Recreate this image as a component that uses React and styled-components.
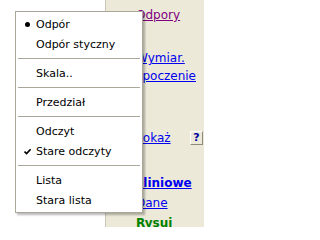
import React from "react";
import styled, { createGlobalStyle } from "styled-components";

const GlobalStyle = createGlobalStyle`
  html, body {
    margin: 0;
    padding: 0;
    background: #fff;
    overflow: hidden;
  }
`;

const Page = styled.div`
  position: relative;
  display: flex;
  width: 204px;
  height: 227px;
  overflow: hidden;
  font-family: "DejaVu Sans", "Liberation Sans", sans-serif;
`;

const LeftPane = styled.div`
  width: 105px;
  background: #fff;
  border-right: 1px solid #c9c6b9;
`;

const RightPane = styled.div`
  flex: 1;
  display: flex;
  flex-direction: column;
  background: #ece9d8;
  padding: 6px 1px 0 30px;
  font-size: 12px;
  line-height: 18px;
`;

const Link = styled.a`
  display: block;
  color: ${({ $visited }) => ($visited ? "#800080" : "#0000ee")};
  text-decoration: underline;
  white-space: nowrap;
  margin-top: ${({ $gap }) => $gap || 0}px;
  margin-left: ${({ $shift }) => -($shift || 0)}px;
  font-weight: ${({ $bold }) => ($bold ? "bold" : "normal")};
`;

const Heading = styled.div`
  color: #008000;
  font-weight: bold;
  white-space: nowrap;
  margin-top: 2px;
`;

const Row = styled.div`
  display: flex;
  align-items: center;
  margin-top: 44px;
`;

const HelpButton = styled.button`
  margin-left: auto;
  width: 13px;
  height: 14px;
  padding: 0;
  background: #ece9d8;
  border: 1px solid;
  border-color: #fff #8d8a7e #8d8a7e #fff;
  color: #00009c;
  font-family: inherit;
  font-size: 11px;
  font-weight: bold;
  line-height: 12px;
`;

/* popup menu */
const Menu = styled.ul`
  position: absolute;
  left: 15px;
  top: 11px;
  width: 126px;
  margin: 0;
  padding: 2px 0;
  list-style: none;
  background: #fff;
  border: 1px solid #aca899;
  box-shadow: 2px 2px 2px rgba(0, 0, 0, 0.28);
  font-size: 11px;
  color: #000;
`;

const Item = styled.li`
  display: flex;
  align-items: center;
  height: 20px;
  white-space: nowrap;
`;

const Mark = styled.span`
  display: flex;
  align-items: center;
  justify-content: center;
  width: 20px;
  padding-left: 2px;
  box-sizing: border-box;
`;

const Dot = styled.span`
  width: 5px;
  height: 5px;
  border-radius: 50%;
  background: #000;
`;

const Separator = styled.li`
  height: 9px;
  display: flex;
  align-items: center;
  padding: 0 2px;

  &::after {
    content: "";
    flex: 1;
    height: 1px;
    background: #aca899;
  }
`;

function Check() {
  return (
    <svg width="7" height="7" viewBox="0 0 7 7">
      <path d="M0.5 3.5 L2.6 5.6 L6.6 1.2" fill="none" stroke="#000" strokeWidth="1.6" />
    </svg>
  );
}

function MenuItem({ mark, children }) {
  return (
    <Item>
      <Mark>
        {mark === "dot" && <Dot />}
        {mark === "check" && <Check />}
      </Mark>
      {children}
    </Item>
  );
}

export default function App() {
  return (
    <>
      <GlobalStyle />
      <Page>
        <LeftPane />
        <RightPane>
          <Link $visited>Odpory</Link>
          <Link $gap={25}>Wymiar.</Link>
          <Link $shift={15}>Rozpoczenie</Link>
          <Row>
            <Link>Pokaż</Link>
            <HelpButton>?</HelpButton>
          </Row>
          <Link $gap={27} $shift={15} $bold>
            Nieliniowe
          </Link>
          <Link $gap={2}>Dane</Link>
          <Heading>Rysuj</Heading>
        </RightPane>

        <Menu>
          <MenuItem mark="dot">Odpór</MenuItem>
          <MenuItem>Odpór styczny</MenuItem>
          <Separator />
          <MenuItem>Skala..</MenuItem>
          <Separator />
          <MenuItem>Przedział</MenuItem>
          <Separator />
          <MenuItem>Odczyt</MenuItem>
          <MenuItem mark="check">Stare odczyty</MenuItem>
          <Separator />
          <MenuItem>Lista</MenuItem>
          <MenuItem>Stara lista</MenuItem>
        </Menu>
      </Page>
    </>
  );
}
